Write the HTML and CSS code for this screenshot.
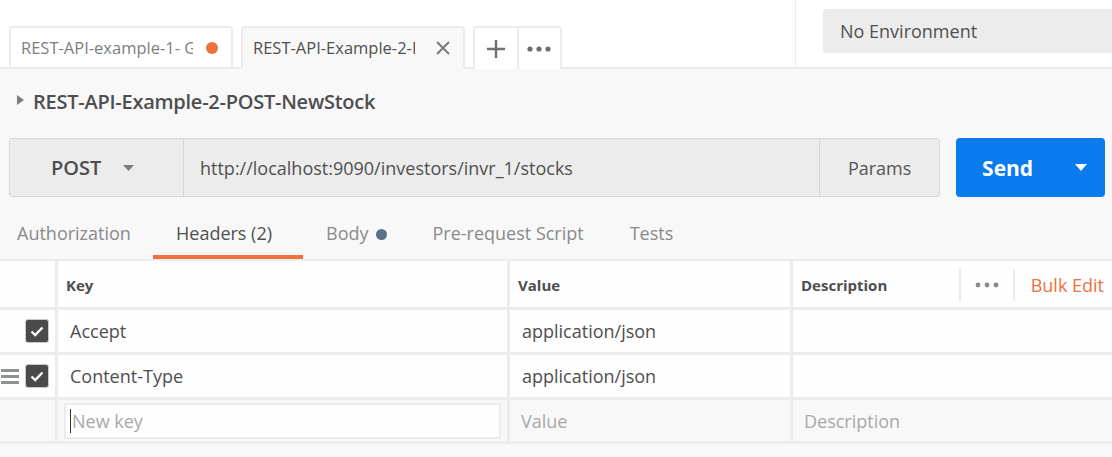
FILE: index.html
```html
<!DOCTYPE html>
<html>
<head>
<meta charset="utf-8">
<link rel="stylesheet" href="styles.css">
</head>
<body>
<div class="topbar">
  <div class="tabstrip">
    <div class="tab">
      <span class="tab-label muted w1">REST-API-example-1- GET</span>
      <span class="dot-orange"></span>
    </div>
    <div class="tab active">
      <span class="tab-label w2">REST-API-Example-2-POST</span>
      <svg class="close" width="14" height="14" viewBox="0 0 14 14"><path d="M1 1L13 13M13 1L1 13" stroke="#7a7a7a" stroke-width="2" fill="none"/></svg>
    </div>
    <div class="tab-actions">
      <div class="tab-btn"><svg width="20" height="20" viewBox="0 0 20 20"><path d="M10 1V19M1 10H19" stroke="#707070" stroke-width="2.4" fill="none"/></svg></div>
      <div class="tab-btn"><svg width="24" height="6" viewBox="0 0 24 6"><circle cx="3" cy="3" r="2.6" fill="#6e6e6e"/><circle cx="12" cy="3" r="2.6" fill="#6e6e6e"/><circle cx="21" cy="3" r="2.6" fill="#6e6e6e"/></svg></div>
    </div>
  </div>
  <div class="envarea">
    <div class="env">No Environment</div>
  </div>
</div>

<div class="titlerow">
  <svg class="tri" width="7" height="10" viewBox="0 0 7 10"><path d="M0 0L7 5L0 10Z" fill="#7d7d7d"/></svg>
  <span class="title">REST-API-Example-2-POST-NewStock</span>
</div>

<div class="urlrow">
  <div class="urlbox">
    <div class="method"><span>POST</span><svg width="11" height="6" viewBox="0 0 11 6"><path d="M0 0H11L5.5 6Z" fill="#7d7d7d"/></svg></div>
    <div class="url">http://localhost:9090/investors/invr_1/stocks</div>
    <div class="params">Params</div>
  </div>
  <div class="send"><span>Send</span><svg width="12" height="7" viewBox="0 0 12 7"><path d="M0 0H12L6 7Z" fill="#fff"/></svg></div>
</div>

<div class="reqtabs">
  <div class="rtab first">Authorization</div>
  <div class="rtab on">Headers (2)</div>
  <div class="rtab">Body <span class="bodydot"></span></div>
  <div class="rtab">Pre-request Script</div>
  <div class="rtab">Tests</div>
</div>

<div class="table">
  <div class="cell chk"></div>
  <div class="cell head">Key</div>
  <div class="cell head">Value</div>
  <div class="cell head desc-head">
    <span>Description</span>
    <div class="head-tools">
      <span class="vsep"></span>
      <svg width="24" height="6" viewBox="0 0 24 6"><circle cx="3" cy="3" r="2.4" fill="#8a8a8a"/><circle cx="12" cy="3" r="2.4" fill="#8a8a8a"/><circle cx="21" cy="3" r="2.4" fill="#8a8a8a"/></svg>
      <span class="vsep"></span>
      <span class="bulk">Bulk Edit</span>
    </div>
  </div>

  <div class="cell chk"><span class="box"><svg width="14" height="11" viewBox="0 0 14 11"><path d="M1.5 5.5L5.2 9L12.5 1.5" stroke="#fff" stroke-width="2.4" fill="none"/></svg></span></div>
  <div class="cell">Accept</div>
  <div class="cell">application/json</div>
  <div class="cell"></div>

  <div class="cell chk"><span class="grip"><i></i><i></i><i></i></span><span class="box"><svg width="14" height="11" viewBox="0 0 14 11"><path d="M1.5 5.5L5.2 9L12.5 1.5" stroke="#fff" stroke-width="2.4" fill="none"/></svg></span></div>
  <div class="cell">Content-Type</div>
  <div class="cell">application/json</div>
  <div class="cell"></div>

  <div class="cell chk blank"></div>
  <div class="cell blank keyin"><div class="newkey"><span class="caret"></span>New key</div></div>
  <div class="cell blank ph">Value</div>
  <div class="cell blank ph">Description</div>
</div>
</body>
</html>
```

FILE: styles.css
```css
* { box-sizing: border-box; }
html, body { margin: 0; padding: 0; }
body {
  width: 1112px;
  height: 457px;
  overflow: hidden;
  background: #f8f8f8;
  font-family: "Open Sans", "Noto Sans", sans-serif;
  color: #505050;
}

/* top bar */
.topbar {
  display: flex;
  height: 69px;
  background: #fff;
  border-bottom: 2px solid #ebebeb;
}
.tabstrip {
  width: 796px;
  border-right: 1px solid #ececec;
  display: flex;
  align-items: flex-end;
  padding-left: 9px;
  gap: 8px;
}
.tab {
  width: 224px;
  height: 43px;
  margin-bottom: -2px;
  border: 2px solid #ececec;
  border-bottom: 2px solid #ebebeb;
  border-radius: 4px 4px 0 0;
  background: #fff;
  display: flex;
  align-items: center;
  padding: 0 13px 0 10px;
  overflow: hidden;
}
.tab.active {
  background: #f8f8f8;
  border-bottom-color: #f8f8f8;
}
.tab-label {
  font-size: 16.5px;
  white-space: nowrap;
  overflow: hidden;
  flex: none;
  color: #505050;
}
.tab-label.w1 { width: 172px; }
.tab-label.w2 { width: 162px; }
.tab-label.muted { color: #7e7e7e; }
.dot-orange {
  width: 12px;
  height: 12px;
  border-radius: 50%;
  background: #f0703d;
  margin-left: auto;
}
.close { margin-left: auto; }
.tab-actions {
  display: flex;
  width: 89px;
  height: 43px;
  margin-bottom: -2px;
  border: 2px solid #ececec;
  border-bottom: none;
  border-radius: 4px 4px 0 0;
  background: #fff;
}
.tab-btn {
  flex: 1;
  display: flex;
  align-items: center;
  justify-content: center;
}
.tab-btn + .tab-btn { border-left: 2px solid #ececec; }

.envarea {
  flex: 1;
  padding: 9px 0 0 27px;
}
.env {
  height: 44px;
  background: #ececec;
  border-radius: 4px 0 0 4px;
  font-size: 18px;
  line-height: 44px;
  padding-left: 17px;
  color: #505050;
}

/* title */
.titlerow {
  display: flex;
  align-items: center;
  height: 64px;
  padding-left: 17px;
}
.tri { margin-right: 9px; margin-top: -2px; }
.title {
  font-size: 20px;
  font-weight: 600;
  color: #4e4e4e;
  letter-spacing: -0.25px;
}

/* url */
.urlrow {
  display: flex;
  padding: 5px 7px 0 9px;
  height: 64px;
  gap: 16px;
}
.urlbox {
  display: flex;
  width: 932px;
  height: 59px;
  border: 1px solid #d6d6d6;
  border-radius: 3px;
  background: #ececec;
}
.method {
  width: 174px;
  border-right: 1px solid #d6d6d6;
  display: flex;
  align-items: center;
  padding-left: 41px;
  font-size: 20px;
  font-weight: 600;
  color: #4e4e4e;
}
.method svg { margin-left: 22px; }
.url {
  flex: 1;
  display: flex;
  align-items: center;
  padding-left: 16px;
  font-size: 18px;
  color: #505050;
}
.params {
  width: 120px;
  border-left: 1px solid #d6d6d6;
  display: flex;
  align-items: center;
  justify-content: center;
  font-size: 18px;
  color: #555;
}
.send {
  width: 149px;
  height: 59px;
  background: #097bed;
  border-radius: 4px;
  display: flex;
  align-items: center;
  padding: 0 18px 0 26px;
  color: #fff;
  font-size: 21px;
  font-weight: 700;
}
.send svg { margin-left: auto; }

/* request tabs */
.reqtabs {
  display: flex;
  height: 62px;
}
.rtab {
  padding: 24px 23px 0 23px;
  font-size: 18px;
  line-height: 25px;
  color: #8a8a8a;
  height: 62px;
  display: flex;
  align-items: flex-start;
  white-space: nowrap;
}
.rtab.first { padding-left: 17px; width: 153px; }
.rtab.on {
  width: 150px;
  color: #505050;
  border-bottom: 4px solid #f0703d;
}
.bodydot {
  display: inline-block;
  width: 11px;
  height: 11px;
  border-radius: 50%;
  background: #5b7189;
  margin: 8px 0 0 7px;
}

/* table */
.table {
  display: grid;
  grid-template-columns: 55px 449px 280px 1fr;
  grid-template-rows: 46px 42px 42px 41px;
  gap: 3px;
  background: #ececec;
  border-top: 2px solid #ececec;
  border-bottom: 3px solid #ececec;
}
.cell {
  background: #fefefe;
  display: flex;
  align-items: center;
  padding-left: 12px;
  font-size: 18px;
  color: #4e4e4e;
  white-space: nowrap;
}
.cell.head {
  font-size: 15px;
  font-weight: 700;
  padding-left: 8px;
  padding-top: 2px;
}
.desc-head { padding-right: 8px; }
.head-tools {
  margin-left: auto;
  display: flex;
  align-items: center;
  gap: 14px;
}
.vsep {
  width: 2px;
  height: 32px;
  background: #ebebeb;
}
.bulk {
  font-size: 18px;
  font-weight: 400;
  color: #f0703d;
  margin-left: 2px;
}
.cell.chk {
  padding-left: 0;
  justify-content: flex-end;
  padding-right: 6px;
}
.box {
  width: 24px;
  height: 24px;
  border-radius: 3px;
  background: #4a4a4a;
  border: 1px solid #c8c8c8;
  display: flex;
  align-items: center;
  justify-content: center;
}
.grip {
  display: flex;
  flex-direction: column;
  gap: 3px;
  margin-right: 6px;
}
.grip i {
  display: block;
  width: 18px;
  height: 3px;
  background: #8b9292;
}
.cell.blank { background: #f8f8f8; }
.cell.ph { color: #a8a8a8; padding-left: 11px; }
.keyin { padding-left: 6px; padding-right: 6px; }
.newkey {
  flex: 1;
  height: 36px;
  border: 2px solid #ececec;
  background: #fdfdfd;
  display: flex;
  align-items: center;
  padding-left: 4px;
  color: #a8a8a8;
  font-size: 18px;
}
.caret {
  width: 1px;
  height: 24px;
  background: #333;
  margin-right: 1px;
}
```
